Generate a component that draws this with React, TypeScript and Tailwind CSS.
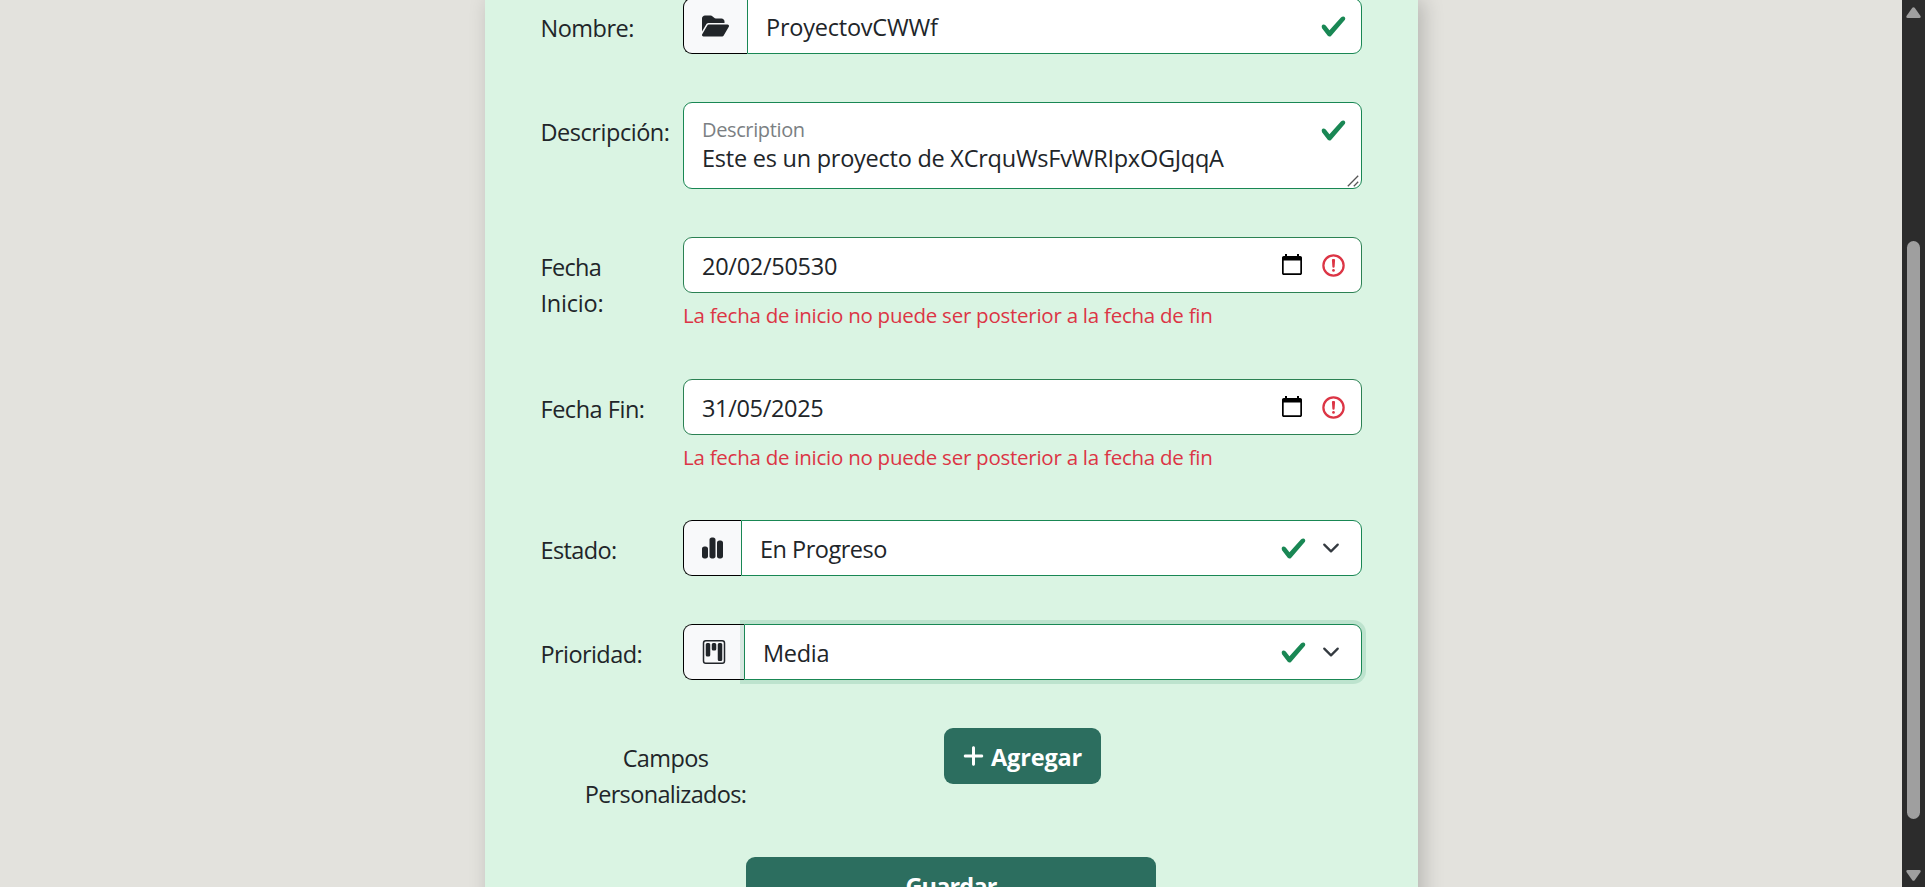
import type { ReactNode } from "react";
import { FaChartSimple, FaFolderOpen, FaPlus } from "react-icons/fa6";
import { BsKanban } from "react-icons/bs";

function Check() {
  return (
    <svg viewBox="0 0 8 8" className="size-[27px] shrink-0" fill="#198754">
      <path d="M2.3 6.73.6 4.53c-.4-1.04.46-1.4 1.1-.8l1.1 1.4 3.4-3.8c.6-.63 1.6-.27 1.2.7l-4 4.6c-.43.5-.8.4-1.1.1z" />
    </svg>
  );
}

function Invalid() {
  return (
    <svg viewBox="0 0 12 12" className="size-[27px] shrink-0" fill="none" stroke="#dc3545">
      <circle cx="6" cy="6" r="4.5" />
      <path strokeLinejoin="round" d="M5.8 3.6h.4L6 6.5z" />
      <circle cx="6" cy="8.2" r=".6" fill="#dc3545" stroke="none" />
    </svg>
  );
}

function Calendar() {
  return (
    <svg viewBox="0 0 24 24" className="size-6 shrink-0" fill="#000">
      <path
        fillRule="evenodd"
        d="M5 1h2v2h10V1h2v2h1.2c1 0 1.8.8 1.8 1.8v15.4c0 1-.8 1.8-1.8 1.8H3.8c-1 0-1.8-.8-1.8-1.8V4.8C2 3.8 2.8 3 3.8 3H5zM3.7 7.500v12.800h16.600V7.500z"
      />
    </svg>
  );
}

function Chevron() {
  return (
    <svg viewBox="0 0 16 16" className="size-[18px] shrink-0" fill="none" stroke="#343a40" strokeWidth="2" strokeLinecap="round" strokeLinejoin="round">
      <path d="m2 5 6 6 6-6" />
    </svg>
  );
}

function Row({ label, height, children }: { label: ReactNode; height: string; children: ReactNode }) {
  return (
    <div className={`flex shrink-0 ${height}`}>
      <div className="w-[144px] shrink-0 pt-3 pl-[1.5px] leading-9">{label}</div>
      <div className="w-[679px]">{children}</div>
    </div>
  );
}

function Addon({ width, children }: { width: string; children: ReactNode }) {
  return (
    <div className={`flex h-14 shrink-0 items-center rounded-l-[9px] border border-r-0 border-black bg-[#f8f9fa] pl-[18px] ${width}`}>
      {children}
    </div>
  );
}

function DateField({ value, tracking }: { value: string; tracking: string }) {
  return (
    <>
      <div className="flex h-14 items-center rounded-[9px] border border-[#2b8153] bg-white pr-3.5 pl-[18px]">
        <span className={`pt-0.5 leading-9 ${tracking}`}>{value}</span>
        <span className="ml-auto flex items-center gap-4">
          <Calendar />
          <Invalid />
        </span>
      </div>
      <p className="mt-[6px] text-[20.5px] leading-8 tracking-[-0.25px] whitespace-nowrap text-[#dc3545]">
        La fecha de inicio no puede ser posterior a la fecha de fin
      </p>
    </>
  );
}

export default function App() {
  return (
    <div className="flex h-[887px] w-[1925px] overflow-hidden bg-[#e3e2dd] font-['Open_Sans',sans-serif] text-[23.5px] text-[#212529]">
      <main className="flex min-w-0 flex-1 pl-[485px]">
        <form className="flex h-[960px] w-[933px] shrink-0 flex-col bg-[#daf4e3] pl-[54px] shadow-[5px_0_20px_rgba(0,0,0,0.2)]">
          <div className="-mt-0.5 flex flex-col">
            <Row height="h-[104px]" label={<span className="tracking-[-0.5px]">Nombre:</span>}>
              <div className="flex">
                <Addon width="w-[64px]">
                  <FaFolderOpen className="h-6 w-[27px]" />
                </Addon>
                <div className="flex h-14 flex-1 items-center justify-between rounded-r-[9px] border border-[#198754] bg-white pr-3.5 pl-[18px]">
                  <span className="pt-0.5 leading-9 tracking-[-0.22px]">ProyectovCWWf</span>
                  <Check />
                </div>
              </div>
            </Row>

            <Row height="h-[135px]" label={<span className="tracking-[-0.46px]">Descripción:</span>}>
              <div className="relative flex h-[87px] justify-between rounded-[9px] border border-[#198754] bg-white pt-3.5 pr-3.5 pl-[18px]">
                <div className="whitespace-nowrap">
                  <div className="h-[23px] text-[20px] leading-[26px] tracking-[-0.37px] text-[#7b7f83]">Description</div>
                  <div className="leading-9 tracking-[-0.245px]">Este es un proyecto de XCrquWsFvWRIpxOGJqqA</div>
                </div>
                <Check />
                <svg viewBox="0 0 12 12" className="absolute right-0.5 bottom-px size-3" stroke="#555" strokeWidth="1.3" fill="none">
                  <path d="M.8 11.200 11.200.800M6.800 11.200l4.400-4.400" />
                </svg>
              </div>
            </Row>

            <Row
              height="h-[142px]"
              label={
                <>
                  <div className="tracking-[-0.7px]">Fecha</div>
                  <div className="tracking-[-0.2px]">Inicio:</div>
                </>
              }
            >
              <DateField value="20/02/50530" tracking="tracking-[-0.28px]" />
            </Row>

            <Row height="h-[141px]" label={<span className="tracking-[-0.48px]">Fecha Fin:</span>}>
              <DateField value="31/05/2025" tracking="tracking-[-0.33px]" />
            </Row>

            <Row height="h-[104px]" label={<span className="tracking-[-0.62px]">Estado:</span>}>
              <div className="flex">
                <Addon width="w-[58px]">
                  <FaChartSimple className="h-6 w-[21px]" />
                </Addon>
                <div className="flex h-14 flex-1 items-center rounded-r-[9px] border border-[#198754] bg-white pr-[21px] pl-[18px]">
                  <span className="pt-0.5 leading-9 tracking-[-0.5px]">En Progreso</span>
                  <span className="ml-auto flex items-center gap-[15px]">
                    <Check />
                    <Chevron />
                  </span>
                </div>
              </div>
            </Row>

            <Row height="h-[104px]" label={<span className="tracking-[-0.58px]">Prioridad:</span>}>
              <div className="flex">
                <Addon width="w-[61px]">
                  <BsKanban className="size-6" />
                </Addon>
                <div className="flex h-14 flex-1 items-center rounded-r-[9px] border border-[#198754] bg-white pr-[21px] pl-[18px] shadow-[0_0_0_4px_rgba(25,135,84,0.15)]">
                  <span className="pt-0.5 leading-9 tracking-[-0.3px]">Media</span>
                  <span className="ml-auto flex items-center gap-[15px]">
                    <Check />
                    <Chevron />
                  </span>
                </div>
              </div>
            </Row>

            <div className="flex h-[129px] items-start">
              <div className="ml-[30px] w-[193px] pt-3 text-center leading-9">
                <div className="tracking-[-0.6px]">Campos</div>
                <div className="tracking-[-0.66px]">Personalizados:</div>
              </div>
              <button type="button" className="ml-[182px] flex h-14 w-[157px] items-center rounded-[9px] bg-[#2c6e5f] pl-[19px] font-bold text-white">
                <FaPlus className="h-6 w-[21px]" />
                <span className="pt-0.5 pl-[7px] leading-9 tracking-[-0.15px]">Agregar</span>
              </button>
            </div>

            <button type="submit" className="ml-[207px] h-14 w-[410px] rounded-[9px] bg-[#2c6e5f] pt-0.5 leading-9 font-bold tracking-[-0.85px] text-white">
              Guardar
            </button>
          </div>
        </form>
      </main>

      <div className="flex w-[23px] shrink-0 flex-col items-center bg-[#2c2c2c]">
        <svg viewBox="0 0 15 11" className="mt-[6.5px] h-[11px] w-[15px] shrink-0" fill="#9f9f9f">
          <path d="M6.300.800q1.200-1.300 2.400 0l5.800 8.200q.7 2-1.200 2H1.700q-1.900 0-1.200-2z" />
        </svg>
        <div className="mt-[223.5px] h-[578px] w-[13px] shrink-0 rounded-full bg-[#9f9f9f]" />
        <svg viewBox="0 0 15 11" className="mt-[51px] h-[11px] w-[15px] shrink-0 rotate-180" fill="#9f9f9f">
          <path d="M6.300.800q1.200-1.300 2.400 0l5.800 8.200q.7 2-1.200 2H1.700q-1.900 0-1.200-2z" />
        </svg>
      </div>
    </div>
  );
}
